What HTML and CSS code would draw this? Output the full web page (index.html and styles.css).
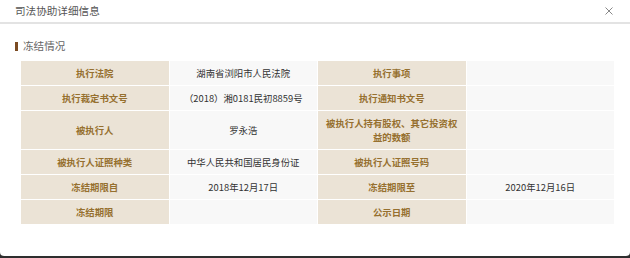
FILE: index.html
```html
<!DOCTYPE html>
<html lang="zh-CN">
<head>
<meta charset="utf-8">
<title>司法协助详细信息</title>
<link rel="stylesheet" href="styles.css">
</head>
<body>
<div class="modal">
  <div class="header">
    <span class="title">司法协助详细信息</span>
    <svg class="close" width="8" height="8" viewBox="0 0 8 8"><path d="M0.5 0.5L7.5 7.5M7.5 0.5L0.5 7.5" stroke="#888" stroke-width="1" fill="none"/></svg>
  </div>
  <div class="body">
    <div class="section-title"><span class="bar"></span>冻结情况</div>
    <table class="info">
      <tr><th>执行法院</th><td>湖南省浏阳市人民法院</td><th>执行事项</th><td></td></tr>
      <tr><th>执行裁定书文号</th><td>（2018）湘0181民初8859号</td><th>执行通知书文号</th><td></td></tr>
      <tr><th>被执行人</th><td>罗永浩</td><th>被执行人持有股权、其它投资权益的数额</th><td></td></tr>
      <tr><th>被执行人证照种类</th><td>中华人民共和国居民身份证</td><th>被执行人证照号码</th><td></td></tr>
      <tr><th>冻结期限自</th><td>2018年12月17日</td><th>冻结期限至</th><td>2020年12月16日</td></tr>
      <tr><th>冻结期限</th><td></td><th>公示日期</th><td></td></tr>
    </table>
  </div>
</div>
</body>
</html>
```

FILE: styles.css
```css
html, body {
  margin: 0;
  padding: 0;
  height: 258px;
  overflow: hidden;
  background: #2e2e2e;
  font-family: "Noto Sans CJK SC", "Microsoft YaHei", sans-serif;
}

.modal {
  background: #fff;
  height: 256px;
  border-radius: 0 0 4px 4px;
}

.header {
  height: 24px;
  border-bottom: 2px solid #e3e3e3;
  padding: 0 17px 0 15px;
  display: flex;
  align-items: center;
  justify-content: space-between;
  box-sizing: border-box;
}

.title {
  font-size: 10.6px;
  color: #555;
  line-height: 14px;
  margin-top: -1px;
}

.close {
  display: block;
  margin-top: -1px;
}

.body {
  padding: 15px 15px 0 15px;
}

.section-title {
  display: flex;
  align-items: center;
  font-size: 10.6px;
  line-height: 14px;
  color: #666;
}

.bar {
  width: 3px;
  height: 9px;
  background: #7b4b22;
  margin-right: 5px;
}

.info {
  margin: 7px 0 0 5px;
  width: 595px;
  table-layout: fixed;
  border-collapse: collapse;
  font-size: 9.4px;
  line-height: 14px;
}

.info th,
.info td {
  border: 1px solid #fff;
  padding: 5px 4px;
  text-align: center;
  vertical-align: middle;
}

.info th {
  background: #ebe3d6;
  color: #96702f;
  font-weight: bold;
}

.info td {
  background: #f8f8f8;
  color: #333;
  font-weight: normal;
}
```
